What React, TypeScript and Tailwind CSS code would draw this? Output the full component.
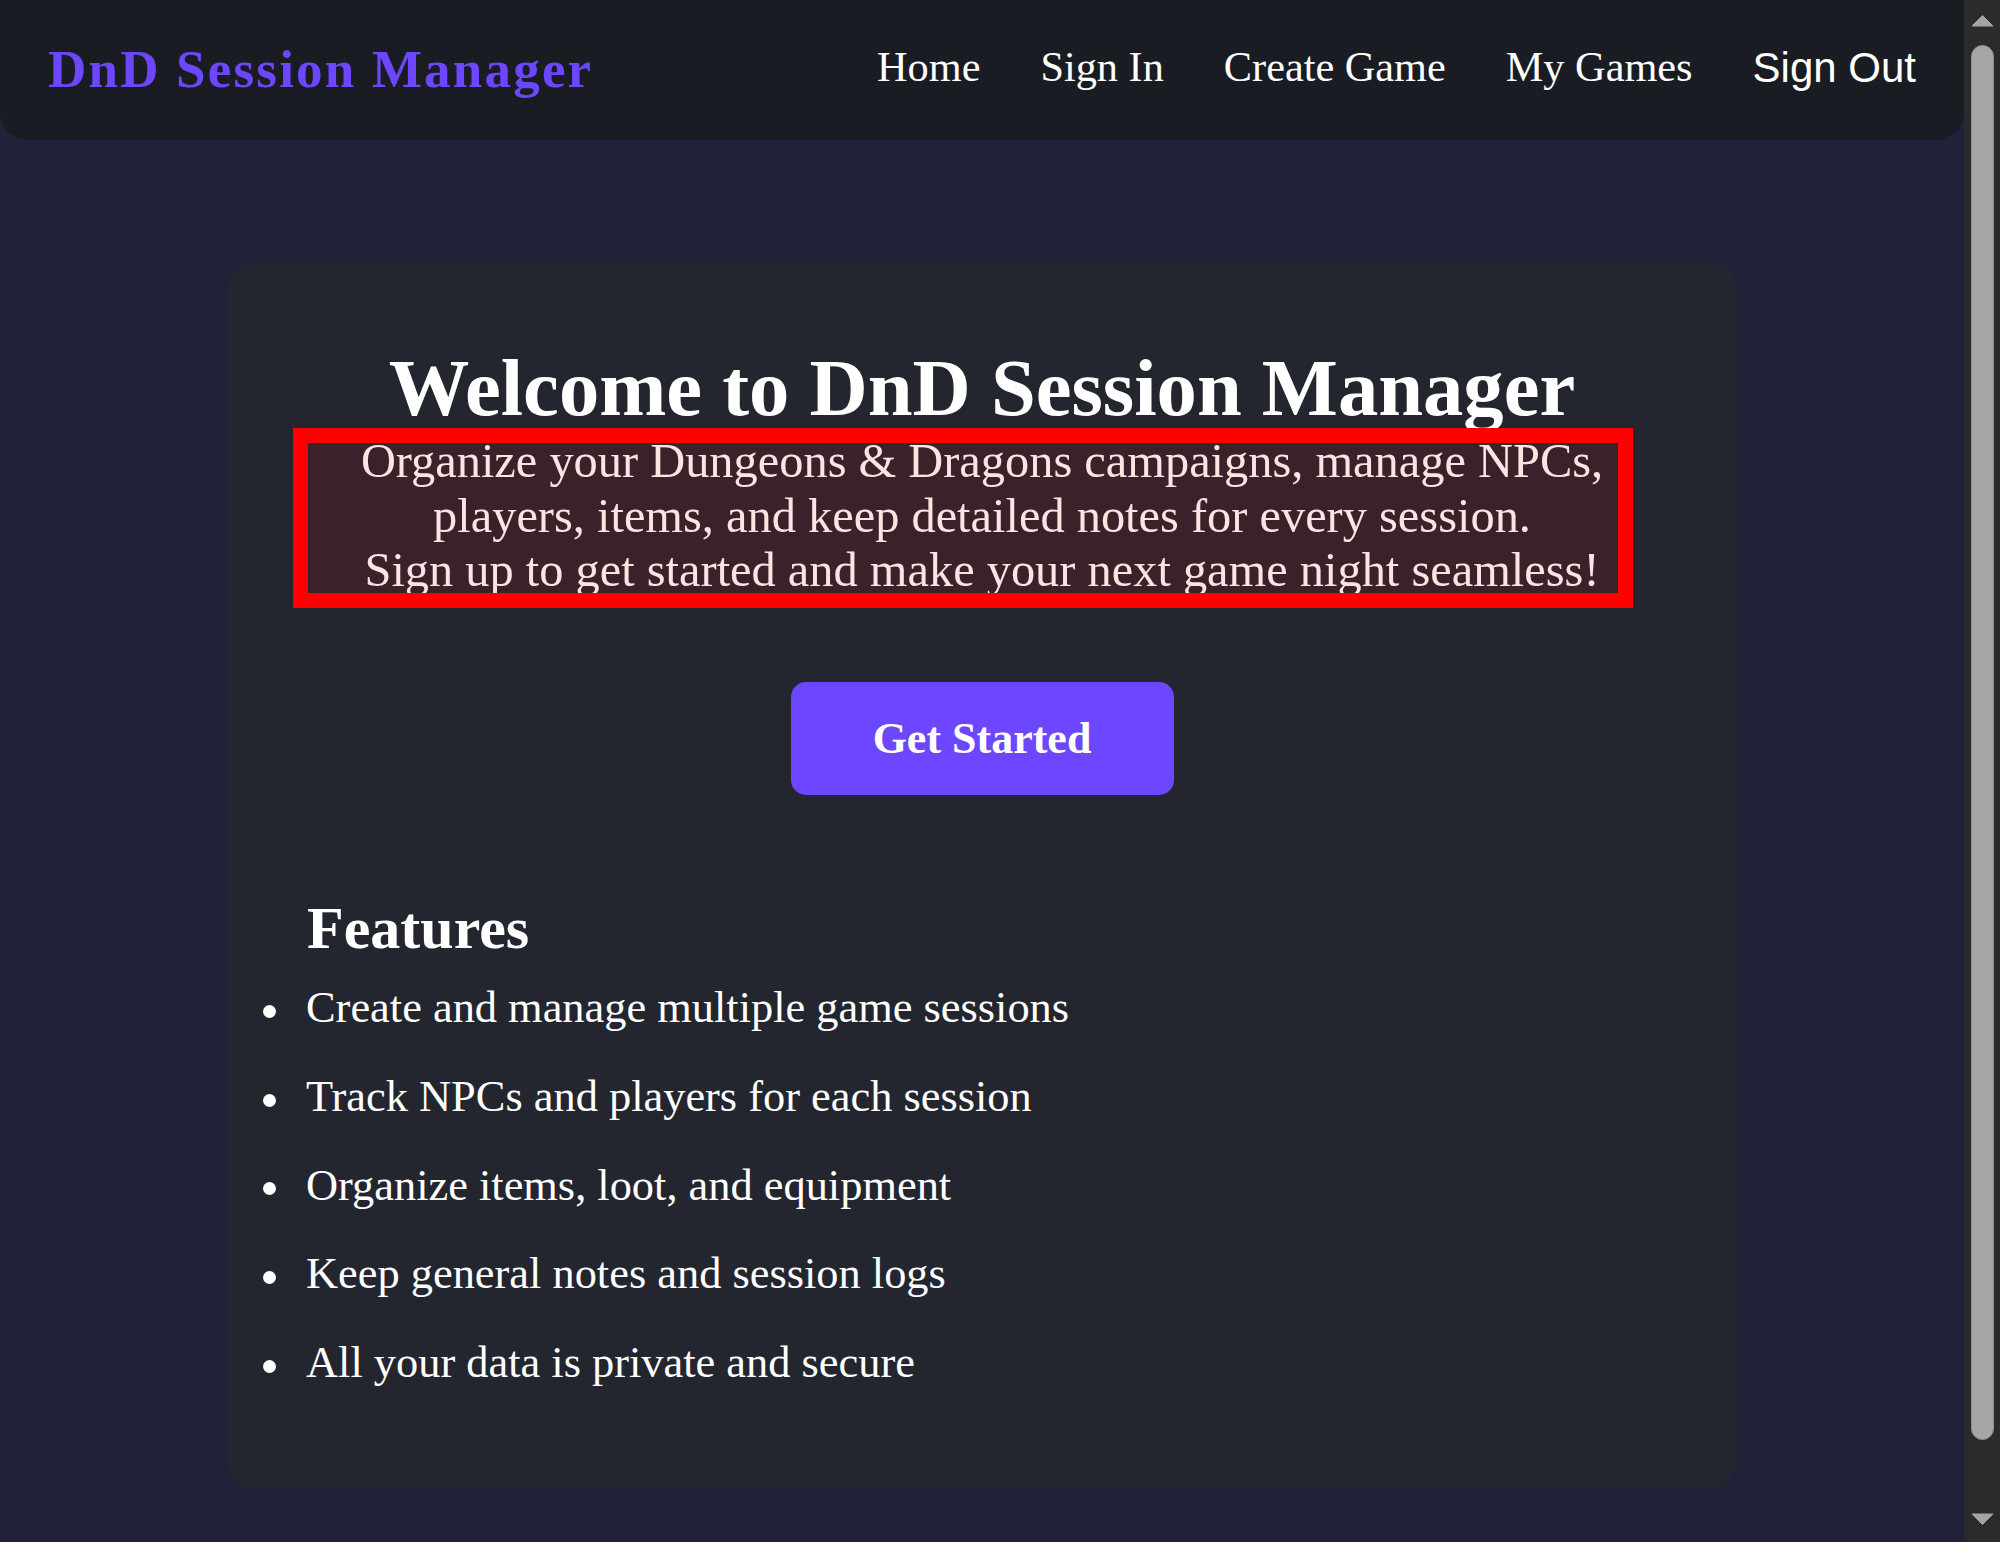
import { ReactNode } from 'react'

const features = [
  'Create and manage multiple game sessions',
  'Track NPCs and players for each session',
  'Organize items, loot, and equipment',
  'Keep general notes and session logs',
  'All your data is private and secure',
]

function NavLink({ children, sans }: { children: ReactNode; sans?: boolean }) {
  return (
    <a
      href="#"
      className={
        sans
          ? "font-['Liberation_Sans',Arial,sans-serif] text-[42px] text-white"
          : "font-['Liberation_Serif',serif] text-[42.3px] text-white"
      }
    >
      {children}
    </a>
  )
}

function Arrow({ down }: { down?: boolean }) {
  return (
    <svg width="23" height="13" viewBox="0 0 23 13" className={down ? 'rotate-180' : ''}>
      <path d="M11.5 1.5 L22 12 H1 Z" fill="#a3a3a3" stroke="#a3a3a3" strokeLinejoin="round" />
    </svg>
  )
}

export default function App() {
  return (
    <div className="flex h-screen overflow-hidden bg-[#21223a] font-['Liberation_Serif',serif]">
      <div className="min-w-0 flex-1">
        <nav className="flex h-[140px] items-center justify-between rounded-b-[28px] bg-[#1a1c23] px-12">
          <span className="text-[53px] font-bold tracking-[2.2px] text-[#6c47ff]">DnD Session Manager</span>
          <div className="mb-[6px] flex items-center gap-[60px]">
            <NavLink>Home</NavLink>
            <NavLink>Sign In</NavLink>
            <NavLink>Create Game</NavLink>
            <NavLink>My Games</NavLink>
            <NavLink sans>Sign Out</NavLink>
          </div>
        </nav>

        <main className="flex justify-center pt-[122px]">
          <section className="w-[1510px] rounded-[28px] bg-[#23262f] px-20 pt-20 pb-[82px] text-white">
            <h1 className="text-center text-[80.6px] font-bold leading-[92px]">Welcome to DnD Session Manager</h1>

            <div className="relative">
              <p className="text-center text-[48.4px] leading-[54.7px]">
                Organize your Dungeons &amp; Dragons campaigns, manage NPCs,
                <br />
                players, items, and keep detailed notes for every session.
                <br />
                Sign up to get started and make your next game night seamless!
              </p>
              <div className="absolute -top-[6px] right-[24px] -bottom-[10px] -left-[14px] border-[15px] border-[#ff0000] bg-[rgba(255,0,0,0.11)]" />
            </div>

            <div className="mt-[84px] flex justify-center">
              <button className="h-[113px] w-[383px] rounded-[15px] bg-[#6c47ff] text-[44px] font-bold text-white">
                Get Started
              </button>
            </div>

            <h2 className="mt-[99px] text-[60px] font-bold leading-[69px]">Features</h2>
            <ul className="-ml-[44px] text-[44.4px] leading-[88.75px]">
              {features.map((f) => (
                <li key={f} className="flex items-center">
                  <span className="mt-[8px] mr-[30px] size-[13px] shrink-0 rounded-full bg-white" />
                  <span>{f}</span>
                </li>
              ))}
            </ul>
          </section>
        </main>
      </div>

      {/* window scrollbar */}
      <div className="flex h-screen w-9 shrink-0 flex-col items-center bg-[#2b2b2b] pt-[14px]">
        <Arrow />
        <div className="mt-[18px] h-[1395px] w-[23px] rounded-full border border-[#8e8e8e] bg-[#a6a6a6]" />
        <div className="mt-[73px]">
          <Arrow down />
        </div>
      </div>
    </div>
  )
}
